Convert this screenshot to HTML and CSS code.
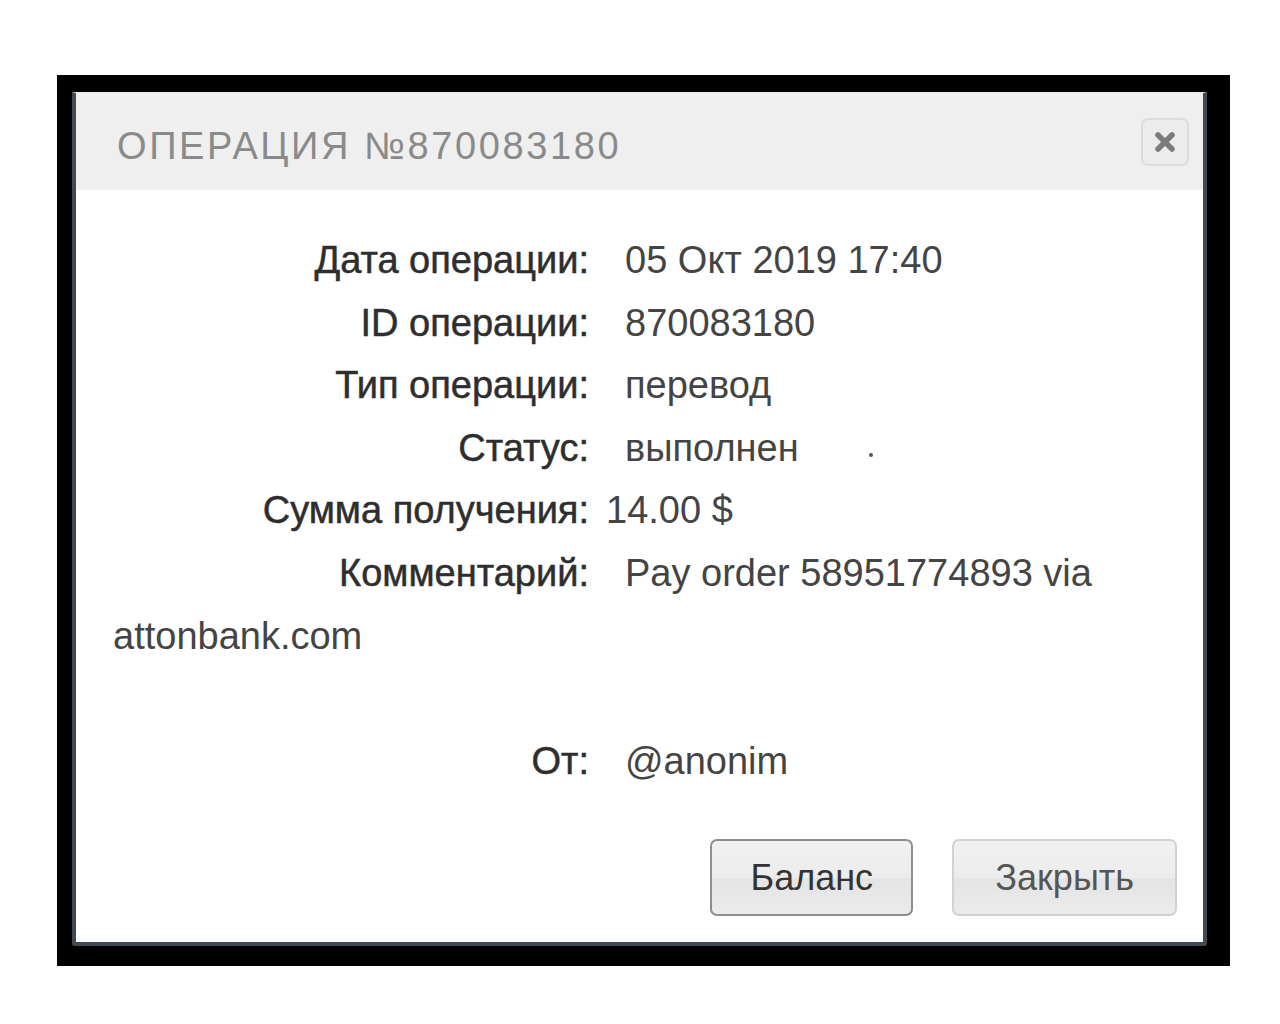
FILE: index.html
```html
<!DOCTYPE html>
<html lang="ru">
<head>
    <meta charset="UTF-8">
    <meta name="viewport" content="width=device-width, initial-scale=1.0">
    <title>Операция №870083180</title>
    <link rel="stylesheet" href="styles.css">
</head>
<body>
<div class="frame">
    <div class="dialog">
        <div class="dialog-header">
            <h2 class="dialog-title">Операция №870083180</h2>
            <button class="close-btn" title="Закрыть">
                <svg width="24" height="24" viewBox="0 0 24 24">
                    <path d="M5 5 L19 19 M19 5 L5 19" stroke="#7b7b7b" stroke-width="5.5" stroke-linecap="round"/>
                </svg>
            </button>
        </div>

        <div class="dialog-body">
            <div class="row"><span class="label">Дата операции:</span>05 Окт 2019 17:40</div>
            <div class="row"><span class="label">ID операции:</span>870083180</div>
            <div class="row"><span class="label">Тип операции:</span>перевод</div>
            <div class="row"><span class="label">Статус:</span>выполнен<span class="dot"></span></div>
            <div class="row"><span class="label label-tight">Сумма получения:</span>14.00 $</div>
            <div class="row"><span class="label">Комментарий:</span>Pay order 58951774893 via attonbank.com</div>
            <div class="row"></div>
            <div class="row"><span class="label">От:</span>@anonim</div>
        </div>

        <div class="dialog-footer">
            <button class="btn btn-primary">Баланс</button>
            <button class="btn">Закрыть</button>
        </div>
    </div>
</div>
</body>
</html>
```

FILE: styles.css
```css
body {
    margin: 0;
    background-color: #ffffff;
    font-family: "Liberation Sans", Arial, sans-serif;
}
.frame {
    width: 1173px;
    margin: 75px 0 0 57px;
    padding: 17px 23px 20px 15px;
    box-sizing: border-box;
    background-color: #000000;
}
.dialog {
    background-color: #ffffff;
    border: 4px solid #3f4a52;
    border-top: 1px solid #e8e8e8;
    border-radius: 0 0 3px 3px;
}
.dialog-header {
    display: flex;
    align-items: center;
    justify-content: space-between;
    height: 97px;
    padding: 0 14px 0 41px;
    background-color: #efefef;
}
.dialog-title {
    margin: 0;
    padding-top: 9px;
    font-size: 38px;
    font-weight: normal;
    letter-spacing: 2.6px;
    text-transform: uppercase;
    color: #8a8a8a;
}
.close-btn {
    display: flex;
    align-items: center;
    justify-content: center;
    width: 48px;
    height: 48px;
    padding: 0;
    border: 2px solid #dcdcdc;
    border-radius: 7px;
    background-color: #ececec;
    cursor: pointer;
}
.dialog-body {
    padding: 39px 30px 0 37px;
    font-size: 38px;
    line-height: 62.6px;
    color: #444444;
}
.row {
    min-height: 62.6px;
}
.label {
    display: inline-block;
    width: 476px;
    margin-right: 36px;
    text-align: right;
    color: #2e2e2e;
    -webkit-text-stroke: 0.5px #2e2e2e;
}
.label-tight {
    margin-right: 17px;
}
.dot {
    display: inline-block;
    width: 4px;
    height: 4px;
    margin-left: 70px;
    border-radius: 50%;
    background-color: #555555;
    vertical-align: 4px;
}
.dialog-footer {
    display: flex;
    justify-content: flex-end;
    gap: 39px;
    padding: 47px 26px 26px 0;
}
.btn {
    height: 77px;
    padding: 0 41px;
    font-family: "Liberation Sans", Arial, sans-serif;
    font-size: 36px;
    color: #555555;
    border: 2px solid #d2d2d2;
    border-radius: 7px;
    background: linear-gradient(#f1f1f1 0%, #ececec 50%, #e4e4e4 52%, #ebebeb 100%);
    cursor: pointer;
}
.btn-primary {
    width: 203px;
    padding: 0;
    color: #333333;
    border-color: #8e8e8e;
}
```
